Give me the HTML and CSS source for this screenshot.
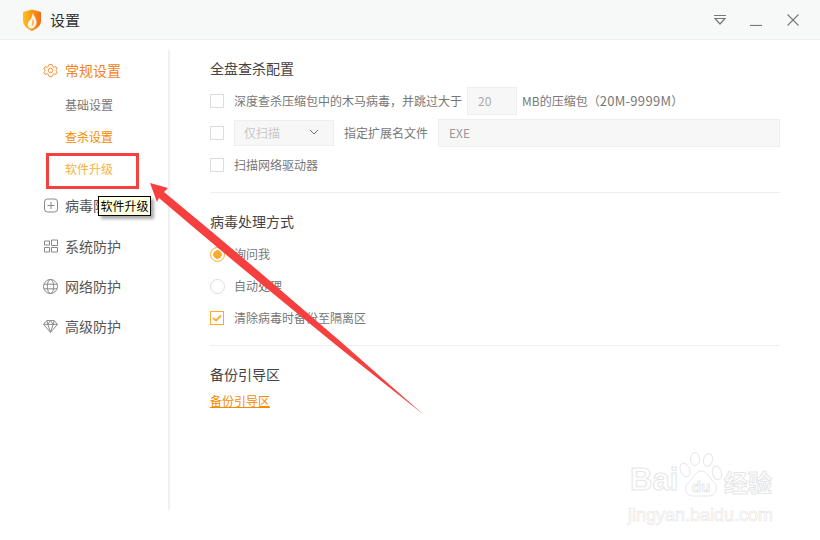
FILE: index.html
```html
<!DOCTYPE html>
<html lang="zh-CN">
<head>
  <meta charset="UTF-8" />
  <title>设置</title>
  <link rel="stylesheet" href="styles.css">
</head>
<body>
  <header class="titlebar">
    <div class="brand">
      <svg class="logo" viewBox="0 0 20 22" width="20" height="22">
        <defs>
          <linearGradient id="shield" x1="0" y1="0" x2="1" y2="0">
            <stop offset="0" stop-color="#ffc21a"/>
            <stop offset="1" stop-color="#f56a12"/>
          </linearGradient>
        </defs>
        <path d="M1 3 L10 0.5 L19 3 V12 C19 17 14 20 10 22 C6 20 1 17 1 12 Z" fill="url(#shield)"/>
        <path d="M11 4 C12 8 15 10 14.5 14 C14 17.5 11.5 19.5 9.5 19.5 C7 19.5 5.5 17.5 5.8 15 C6 12 9 11 9.5 8.5 C10 7 10.5 5.5 11 4 Z" fill="#fff6ea"/>
        <path d="M11 9 C11.5 11 12.5 12.5 12 14.5 C11.5 16 10.5 17 9.5 17.5 C10.5 15 9.5 12.5 11 9 Z" fill="#fbb56b"/>
      </svg>
      <span class="title">设置</span>
    </div>
    <div class="win-btns">
      <svg viewBox="0 0 14 12" width="14" height="12"><path d="M1 1.5 H13 M2 4.5 H12 L7 10 Z" fill="none" stroke="#777" stroke-width="1.2"/></svg>
      <svg viewBox="0 0 12 12" width="12" height="12"><path d="M0 11.5 H12" stroke="#777" stroke-width="1.2"/></svg>
      <svg class="close-btn" viewBox="0 0 12 12" width="12" height="12"><path d="M0.5 0.5 L11.5 11.5 M11.5 0.5 L0.5 11.5" stroke="#777" stroke-width="1.1"/></svg>
    </div>
  </header>

  <div class="body-wrap">
    <aside class="sidebar">
      <div class="nav-group active">
        <svg class="nav-icon" viewBox="0 0 16 16" width="15" height="15">
          <path d="M6.5 1.5 H9.5 L10 3.5 L11.8 4.5 L13.8 3.9 L15.2 6.4 L13.7 7.8 V8.2 L15.2 9.6 L13.8 12.1 L11.8 11.5 L10 12.5 L9.5 14.5 H6.5 L6 12.5 L4.2 11.5 L2.2 12.1 L0.8 9.6 L2.3 8.2 V7.8 L0.8 6.4 L2.2 3.9 L4.2 4.5 L6 3.5 Z" fill="none" stroke="#f58a2c" stroke-width="1"/>
          <circle cx="8" cy="8" r="2.4" fill="none" stroke="#f58a2c"/>
        </svg>
        <span>常规设置</span>
      </div>
      <ul class="sub-list">
        <li>基础设置</li>
        <li class="current">查杀设置</li>
        <li class="hover">软件升级</li>
      </ul>
      <div class="nav-group first-closed">
        <svg class="nav-icon" viewBox="-1 -0.5 15 15" width="15" height="15">
          <rect x="0.5" y="0.5" width="13" height="13" rx="3" fill="none" stroke="#888"/>
          <path d="M7 3.5 V10.5 M3.5 7 H10.5" stroke="#888"/>
        </svg>
        <span>病毒防护</span>
      </div>
      <div class="nav-group">
        <svg class="nav-icon" viewBox="-1 -0.5 15 15" width="15" height="15">
          <path d="M0.5 1.5 H5.5 V5.5 H0.5 Z M0.5 8 H5.5 V12.5 H0.5 Z M7.5 0.5 H13.5 V6 H7.5 Z M7.5 8 H13.5 V12.5 H7.5 Z" fill="none" stroke="#888"/>
        </svg>
        <span>系统防护</span>
      </div>
      <div class="nav-group">
        <svg class="nav-icon" viewBox="0 0 15 15" width="15" height="15">
          <circle cx="7.5" cy="7.5" r="7" fill="none" stroke="#888"/>
          <ellipse cx="7.5" cy="7.5" rx="3.2" ry="7" fill="none" stroke="#888"/>
          <path d="M1 5.2 H14 M1 9.8 H14" stroke="#888"/>
        </svg>
        <span>网络防护</span>
      </div>
      <div class="nav-group">
        <svg class="nav-icon" viewBox="0 0 14 12" width="15" height="13">
          <path d="M3.5 0.5 H10.5 L13.5 4 L7 11.5 L0.5 4 Z M0.5 4 H13.5 M4.5 4 L7 11.5 L9.5 4 M3.5 0.5 L4.5 4 L7 0.5 L9.5 4 L10.5 0.5" fill="none" stroke="#888" stroke-width="0.9"/>
        </svg>
        <span>高级防护</span>
      </div>
    </aside>

    <main class="content">
      <section class="block">
        <h2>全盘查杀配置</h2>
        <div class="row">
          <span class="box"></span>
          <span class="txt">深度查杀压缩包中的木马病毒，并跳过大于</span>
          <span class="field small">20</span>
          <span class="txt">MB的压缩包（<span class="num">20M-9999M</span>）</span>
        </div>
        <div class="row">
          <span class="box"></span>
          <span class="field select">
            <span>仅扫描</span>
            <svg viewBox="0 0 10 6" width="10" height="6"><path d="M1 1 L5 5 L9 1" fill="none" stroke="#777"/></svg>
          </span>
          <span class="txt gap-label">指定扩展名文件</span>
          <span class="field wide">EXE</span>
        </div>
        <div class="row">
          <span class="box"></span>
          <span class="txt">扫描网络驱动器</span>
        </div>
      </section>

      <section class="block">
        <h2>病毒处理方式</h2>
        <div class="row">
          <span class="radio on"></span>
          <span class="txt">询问我</span>
        </div>
        <div class="row">
          <span class="radio"></span>
          <span class="txt">自动处理</span>
        </div>
        <div class="row">
          <span class="box on">
            <svg viewBox="0 0 10 8" width="10" height="8"><path d="M1 4 L4 6.5 L9 1.5" fill="none" stroke="#fbab2e" stroke-width="1.8"/></svg>
          </span>
          <span class="txt">清除病毒时备份至隔离区</span>
        </div>
      </section>

      <section class="block last">
        <h2>备份引导区</h2>
        <a href="#" class="link">备份引导区</a>
      </section>
    </main>
  </div>

  <!-- annotations on top of the screenshot -->
  <div class="mark-box"></div>
  <div class="tip">软件升级</div>
  <svg class="arrow" viewBox="0 0 820 540" width="820" height="540">
    <path d="M150 183 L168 188 L164 192 Q296 301 424 415 Q289 309 159 198 L157 202 Z" fill="#f5403f"/>
  </svg>
  <div class="watermark">
    <div class="wm-logo">
      <span class="wm-bai">Bai</span>
      <svg class="wm-paw" viewBox="0 0 44 46" width="44" height="46">
        <g fill="#fff" stroke="#e6e6e6">
          <ellipse cx="6" cy="18" rx="4.5" ry="7" transform="rotate(-25 6 18)"/>
          <ellipse cx="16" cy="7" rx="4.5" ry="6.5"/>
          <ellipse cx="29" cy="8" rx="4.5" ry="6.5" transform="rotate(15 29 8)"/>
          <ellipse cx="38" cy="21" rx="4.5" ry="7" transform="rotate(-15 38 21)"/>
          <path d="M22 19 C28 19 30 26 35 30 C40 35 37 44 29 44 H14 C7 44 4 36 9 31 C14 27 16 19 22 19 Z"/>
        </g>
        <text class="wm-du" x="22" y="40" text-anchor="middle">du</text>
      </svg>
      <span class="wm-cn">经验</span>
    </div>
    <div class="wm-url">jingyan.baidu.com</div>
  </div>
</body>
</html>
```

FILE: styles.css
```css
* {
  margin: 0;
  padding: 0;
  box-sizing: border-box;
  font-family: "Noto Sans CJK SC", "Liberation Sans", sans-serif;
}

html, body {
  width: 820px;
  height: 540px;
  overflow: hidden;
}

body {
  background: #fff;
  color: #666;
  font-size: 12px;
  position: relative;
}

.titlebar {
  height: 40px;
  display: flex;
  justify-content: space-between;
  align-items: center;
  background: #f7f9f9;
  border-bottom: 1px solid #eee;
  padding: 0 21px 0 22px;
}

.brand {
  display: flex;
  align-items: center;
  gap: 8px;
}

.title {
  font-size: 15px;
  color: #333;
}

.win-btns {
  display: flex;
  align-items: center;
  gap: 23px;
}

.close-btn {
  margin-left: 2px;
}

.body-wrap {
  display: flex;
  padding-top: 10px;
}

.sidebar {
  width: 170px;
  height: 460px;
  border-right: 2px solid #f0f0f0;
  padding: 10px 0 0 43px;
}

.nav-group {
  display: flex;
  align-items: center;
  height: 20px;
  margin-bottom: 20px;
  font-size: 14px;
  color: #555;
  line-height: 20px;
}

.nav-group span {
  margin-left: 7px;
}

.nav-icon {
  flex: 0 0 auto;
}

.nav-group.active {
  color: #f58220;
  margin-bottom: 9px;
}

.first-closed {
  margin-top: 10px;
  margin-bottom: 21px;
}

.sub-list {
  list-style: none;
  padding-left: 22px;
}

.sub-list li {
  height: 32px;
  line-height: 32px;
  color: #777;
}

.sub-list .current {
  color: #f58a00;
}

.sub-list .hover {
  color: #fbb040;
}

.content {
  flex: 1;
  padding: 8px 40px 0 40px;
}

.block {
  border-bottom: 1px solid #eee;
  padding-bottom: 11px;
  margin-bottom: 18px;
}

.block.last {
  border-bottom: none;
}

h2 {
  font-size: 14px;
  font-weight: 400;
  color: #444;
  line-height: 20px;
  margin-bottom: 7px;
}

.row {
  display: flex;
  align-items: center;
  height: 32px;
  color: #777;
}

.txt {
  padding-bottom: 2px;
}

.num {
  font-size: 13px;
  letter-spacing: 0.3px;
}

.box {
  width: 14px;
  height: 14px;
  border: 1px solid #ddd;
  margin-right: 10px;
  flex: 0 0 auto;
  display: flex;
  align-items: center;
  justify-content: center;
}

.box.on {
  border-color: #fbab2e;
}

.radio {
  width: 15px;
  height: 15px;
  border: 1px solid #ddd;
  border-radius: 50%;
  margin-right: 9px;
  flex: 0 0 auto;
}

.radio.on {
  border: 1.5px solid #fbab2e;
  background: radial-gradient(circle, #fbab2e 0 4px, #fff 4.5px);
}

.field {
  height: 28px;
  display: flex;
  align-items: center;
  background: #f7f7f7;
  border: 1px solid #eee;
  color: #aaa;
  padding: 0 0 2px 10px;
}

.field.small {
  width: 50px;
  margin: 0 5px;
}

.field.select {
  width: 100px;
  height: 26px;
  justify-content: space-between;
  padding: 0 14px 2px 9px;
  color: #c8c8c8;
}

.gap-label {
  margin: 0 10px;
}

.field.wide {
  flex: 1;
  color: #999;
}

.link {
  color: #f58a00;
  line-height: 20px;
  display: inline-block;
}

.mark-box {
  position: absolute;
  left: 46px;
  top: 153px;
  width: 93px;
  height: 36px;
  border: 3px solid #f5403f;
}

.tip {
  position: absolute;
  left: 98px;
  top: 196px;
  width: 53px;
  height: 20px;
  background: #ffffe1;
  border: 1px solid #000;
  box-shadow: 3px 3px 3px #aaa;
  color: #000;
  line-height: 18px;
  text-align: center;
  white-space: nowrap;
}

.arrow {
  position: absolute;
  left: 0;
  top: 0;
  pointer-events: none;
}

.watermark {
  position: absolute;
  left: 628px;
  top: 452px;
  color: #fff;
}

.wm-logo {
  display: flex;
  align-items: flex-end;
  height: 46px;
  white-space: nowrap;
  -webkit-text-stroke: 1px #e6e6e6;
  font-weight: 700;
}

.wm-bai {
  font-family: "Liberation Sans", sans-serif;
  font-size: 31px;
  line-height: 36px;
  width: 51px;
  padding-left: 2px;
}

.wm-du {
  font-family: "Liberation Sans", sans-serif;
  font-size: 15px;
  fill: #fff;
  stroke: #e0e0e0;
  stroke-width: 0.7px;
}

.wm-cn {
  font-size: 24px;
  line-height: 32px;
  margin-left: 1px;
}

.wm-url {
  font-family: "Liberation Sans", sans-serif;
  font-size: 18px;
  line-height: 22px;
  margin-top: 6px;
  -webkit-text-stroke: 0.6px #e6e6e6;
  white-space: nowrap;
}
```
